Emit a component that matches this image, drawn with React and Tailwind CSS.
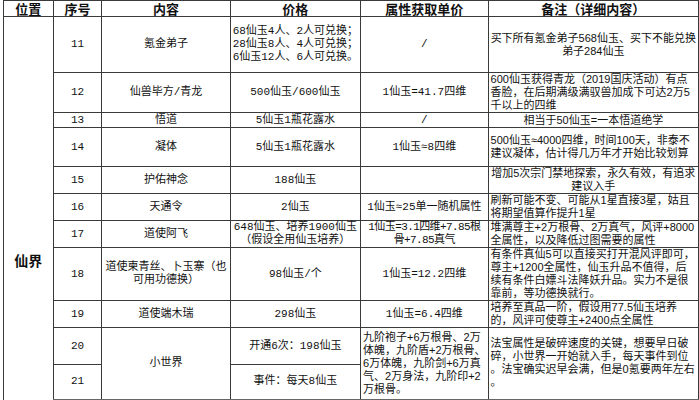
import React from "react";

const serif = { fontFamily: '"Liberation Mono", "Noto Sans CJK SC", monospace' };
const sans = { fontFamily: '"Liberation Sans", "Noto Sans CJK SC", sans-serif' };

const cell = "border border-[#3a3a3a] px-[2px] py-0 align-middle";

const Lines = ({ lines }) =>
  lines.map((l, i) => (
    <div key={i} className="whitespace-nowrap">
      {l}
    </div>
  ));

const rows = [
  {
    no: "11",
    h: "h-[56px]",
    name: "氪金弟子",
    price: ["68仙玉4人、2人可兑换；", "28仙玉8人、4人可兑换；", "6仙玉12人、6人可兑换。"],
    priceLeft: true,
    attr: ["/"],
    note: ["买下所有氪金弟子568仙玉、买下不能兑换", "弟子284仙玉"],
    noteCenter: true,
  },
  {
    no: "12",
    h: "h-[39px]",
    name: "仙兽毕方/青龙",
    price: ["500仙玉/600仙玉"],
    attr: ["1仙玉=41.7四维"],
    note: ["600仙玉获得青龙（2019国庆活动）有点", "香脸，在后期满级满驭兽加成下可达2万5", "千以上的四维"],
  },
  {
    no: "13",
    h: "h-[15px]",
    name: "悟道",
    price: ["5仙玉1瓶花露水"],
    attr: ["/"],
    note: ["相当于50仙玉=一本悟道绝学"],
    noteCenter: true,
  },
  {
    no: "14",
    h: "h-[39px]",
    name: "凝体",
    price: ["5仙玉1瓶花露水"],
    attr: ["1仙玉≈8四维"],
    note: ["500仙玉≈4000四维，时间100天，非泰不", "建议凝体，估计得几万年才开始比较划算"],
  },
  {
    no: "15",
    h: "h-[27px]",
    name: "护佑神念",
    price: ["188仙玉"],
    attr: [""],
    note: ["增加5次宗门禁地探索，永久有效，有追求", "建议入手"],
    noteCenter: true,
  },
  {
    no: "16",
    h: "h-[26px]",
    name: "天通令",
    price: ["2仙玉"],
    attr: ["1仙玉≈25单一随机属性"],
    note: ["刷新可能不变、可能从1星直接3星，姑且", "将期望值算作提升1星"],
  },
  {
    no: "17",
    h: "h-[26px]",
    name: "道使阿飞",
    price: ["648仙玉、培养1900仙玉", "（假设全用仙玉培养）"],
    attr: ["1仙玉=3.1四维+7.85根", "骨+7.85真气"],
    tight: true,
    note: ["堆满尊主+2万根骨、2万真气，风评+8000", "全属性，以及降低过图需要的属性"],
  },
  {
    no: "18",
    h: "h-[53px]",
    name: ["道使柬青丝、卜玉寨（也", "可用功德换）"],
    price: ["98仙玉/个"],
    attr: ["1仙玉=12.2四维"],
    note: [
      "有条件真仙5可以直接买打开混风评即可，",
      "尊主+1200全属性，仙玉升品不值得，后",
      "续有条件白嫖斗法降妖升品。实力不是很",
      "靠前，等功德换就行。",
    ],
  },
  {
    no: "19",
    h: "h-[26px]",
    name: "道使端木瑞",
    price: ["298仙玉"],
    attr: ["1仙玉=6.4四维"],
    note: ["培养至真品一阶，假设用77.5仙玉培养", "的，风评可使尊主+2400点全属性"],
  },
];

export default function App() {
  return (
    <div className="w-[699px] h-[400px] overflow-hidden bg-white text-[#111] pl-[3px]">
      <table className="table-fixed border-collapse text-[11px] leading-[13px]" style={serif}>
        <colgroup>
          <col className="w-[59px]" />
          <col className="w-[58px]" />
          <col className="w-[129px]" />
          <col className="w-[123px]" />
          <col className="w-[123px]" />
          <col className="w-[198px]" />
        </colgroup>
        <thead>
          <tr className="text-[13px] font-bold" style={{ fontFamily: '"Noto Sans CJK SC", sans-serif' }}>
            <th className={`${cell} h-[16px] leading-[14px]`}>位置</th>
            <th className={`${cell} leading-[14px]`}>序号</th>
            <th className={`${cell} leading-[14px]`}>内容</th>
            <th className={`${cell} leading-[14px]`}>价格</th>
            <th className={`${cell} leading-[14px]`}>属性获取单价</th>
            <th className={`${cell} leading-[14px]`}>备注（详细内容）</th>
          </tr>
        </thead>
        <tbody>
          {rows.map((r, i) => (
            <tr key={r.no}>
              {i === 0 && (
                <td
                  rowSpan={12}
                  className={`${cell} text-center text-[14px] font-bold`}
                  style={{ fontFamily: '"Noto Sans CJK SC", sans-serif' }}
                >
                  仙界
                </td>
              )}
              <td className={`${cell} ${r.h} text-center`}>{r.no}</td>
              <td className={`${cell} text-center`}>
                {Array.isArray(r.name) ? <Lines lines={r.name} /> : r.name}
              </td>
              <td className={`${cell} ${r.priceLeft ? "text-left" : "text-center"}`}>
                <Lines lines={r.price} />
              </td>
              <td className={`${cell} text-center ${r.tight ? "tracking-[-0.6px] px-0" : ""}`}>
                <Lines lines={r.attr} />
              </td>
              <td className={`${cell} ${r.noteCenter ? "text-center" : "text-left"}`} style={sans}>
                <Lines lines={r.note} />
              </td>
            </tr>
          ))}
          <tr>
            <td className={`${cell} h-[37px] text-center`}>20</td>
            <td rowSpan={2} className={`${cell} text-center`}>小世界</td>
            <td className={`${cell} text-center`}>开通6次：198仙玉</td>
            <td rowSpan={2} className={`${cell} text-left`} style={sans}>
              <Lines
                lines={[
                  "九阶袍子+6万根骨、2万",
                  "体魄，九阶盾+2万根骨、",
                  "6万体魄，九阶剑+6万真",
                  "气、2万身法，九阶印+2",
                  "万根骨。",
                ]}
              />
            </td>
            <td rowSpan={2} className={`${cell} text-left`} style={sans}>
              <Lines
                lines={[
                  "法宝属性是破碎速度的关键，想要早日破",
                  "碎，小世界一开始就入手，每天事件到位",
                  "。法宝确实迟早会满，但是0氪要两年左右",
                  "。",
                ]}
              />
            </td>
          </tr>
          <tr>
            <td className={`${cell} h-[35px] text-center`}>21</td>
            <td className={`${cell} text-center`}>事件：每天8仙玉</td>
          </tr>
          <tr>
            <td className={`${cell} h-[105px] border-t-2 border-t-[#666]`}></td>
            <td className={`${cell} border-t-2 border-t-[#666]`}></td>
            <td className={`${cell} border-t-2 border-t-[#666]`}></td>
            <td className={`${cell} border-t-2 border-t-[#666]`}></td>
            <td className={`${cell} border-t-2 border-t-[#666]`}></td>
          </tr>
        </tbody>
      </table>
    </div>
  );
}
